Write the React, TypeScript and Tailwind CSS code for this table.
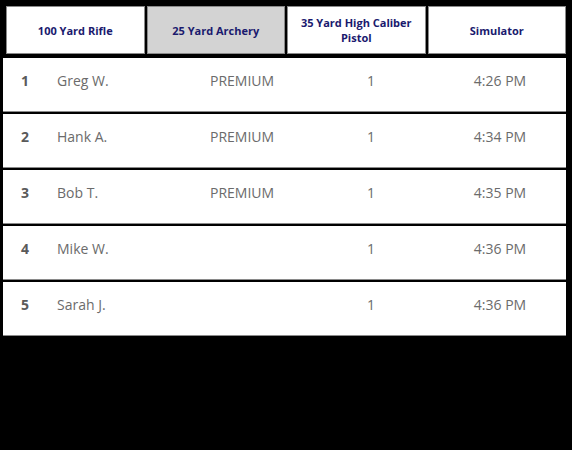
import React from "react"

const tabs = [
    { label: "100 Yard Rifle", active: false },
    { label: "25 Yard Archery", active: true },
    { label: "35 Yard High Caliber Pistol", active: false },
    { label: "Simulator", active: false },
]

const rows = [
    { rank: 1, name: "Greg W.", plan: "PREMIUM", count: 1, time: "4:26 PM" },
    { rank: 2, name: "Hank A.", plan: "PREMIUM", count: 1, time: "4:34 PM" },
    { rank: 3, name: "Bob T.", plan: "PREMIUM", count: 1, time: "4:35 PM" },
    { rank: 4, name: "Mike W.", plan: "", count: 1, time: "4:36 PM" },
    { rank: 5, name: "Sarah J.", plan: "", count: 1, time: "4:36 PM" },
]

export default function App() {
    return (
        <div
            className="w-[572px] h-[450px] bg-black overflow-hidden"
            style={{ fontFamily: '"Open Sans", "Noto Sans", sans-serif' }}
        >
            <div className="grid grid-cols-4 gap-[2px] pl-[6px] pr-[6px] pt-[6px]">
                {tabs.map((tab) => (
                    <div
                        key={tab.label}
                        className={`h-[48px] flex items-center justify-center text-center border border-[#8a8a8a] px-3 text-[11px] leading-[15px] font-bold text-[#1a1a6e] ${
                            tab.active ? "bg-[#d3d3d3]" : "bg-white"
                        }`}
                    >
                        {tab.label}
                    </div>
                ))}
            </div>

            <div className="mt-[4px] pl-[3px] pr-[6px] flex flex-col gap-[2px]">
                {rows.map((row) => (
                    <div
                        key={row.rank}
                        className="h-[54px] bg-white border-b border-[#8a8a8a] flex items-start pt-[12px] text-[14px] text-[#6b6b6b]"
                    >
                        <div className="w-[54px] pl-[18px] font-bold text-[#5a5a5a]">{row.rank}</div>
                        <div className="w-[153px]">{row.name}</div>
                        <div className="w-[111px]">{row.plan}</div>
                        <div className="w-[100px] text-center">{row.count}</div>
                        <div className="w-[100px] text-center ml-[29px]">{row.time}</div>
                    </div>
                ))}
            </div>
        </div>
    )
}
